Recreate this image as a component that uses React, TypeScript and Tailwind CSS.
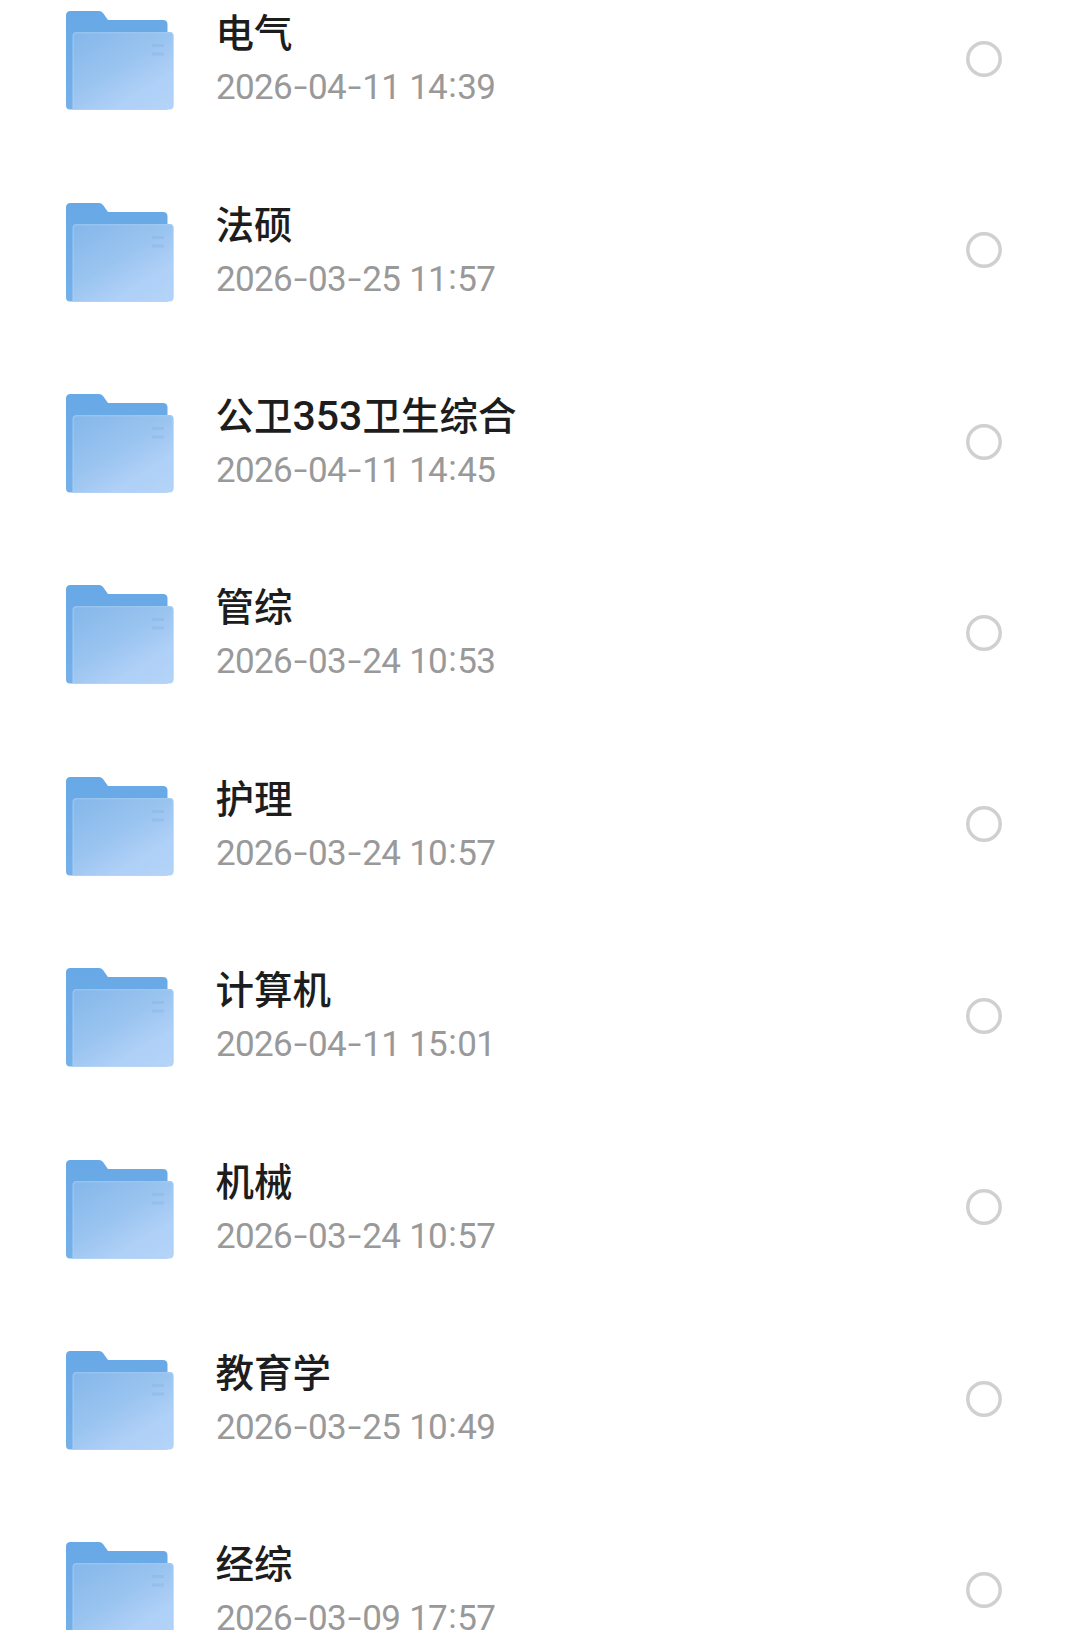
interface Folder {
  name: string;
  date: string;
}

const folders: Folder[] = [
  { name: '电气', date: '2026-04-11 14:39' },
  { name: '法硕', date: '2026-03-25 11:57' },
  { name: '公卫353卫生综合', date: '2026-04-11 14:45' },
  { name: '管综', date: '2026-03-24 10:53' },
  { name: '护理', date: '2026-03-24 10:57' },
  { name: '计算机', date: '2026-04-11 15:01' },
  { name: '机械', date: '2026-03-24 10:57' },
  { name: '教育学', date: '2026-03-25 10:49' },
  { name: '经综', date: '2026-03-09 17:57' },
];

function FolderIcon() {
  return (
    <svg width="108" height="99" viewBox="0 0 108 99" className="shrink-0">
      <defs>
        <linearGradient id="back" x1="0" y1="0" x2="0" y2="1">
          <stop offset="0" stopColor="#67a8e6" />
          <stop offset="1" stopColor="#75b0e9" />
        </linearGradient>
        <linearGradient id="front" x1="0.1" y1="0" x2="0.9" y2="1">
          <stop offset="0" stopColor="#86b8ea" />
          <stop offset="0.45" stopColor="#9ac4f0" />
          <stop offset="0.75" stopColor="#afd0f7" />
          <stop offset="1" stopColor="#b3d3f8" />
        </linearGradient>
      </defs>
      <path
        d="M0 4.5Q0 0 4.5 0H33Q35.5 0 37 2L42 9H97Q101.5 9 101.5 13.5V98.5H4Q0 98.5 0 94.5Z"
        fill="url(#back)"
      />
      <path
        d="M6.5 25Q6.5 21 10.5 21H103.5Q107.5 21 107.5 25V94.5Q107.5 98.5 103.5 98.5H6.5Z"
        fill="url(#front)"
      />
      <path
        d="M7.3 98V25Q7.3 21.7 10.5 21.7H103.5Q106.8 21.7 106.8 25V94.5"
        fill="none"
        stroke="#a5cdf5"
        strokeOpacity="0.5"
        strokeWidth="1.5"
      />
      <path d="M86 34.5H98M86 43H98" stroke="#86b1e2" strokeOpacity="0.4" strokeWidth="3" />
    </svg>
  );
}

function SelectCircle() {
  return (
    <svg width="36" height="36" viewBox="0 0 36 36" className="mt-[32.7px] shrink-0">
      <circle cx="18" cy="18" r="16.2" fill="none" stroke="#d0d0d0" strokeWidth="3.5" />
    </svg>
  );
}

function FolderName({ text }: { text: string }) {
  return (
    <h2 className="h-[44px] whitespace-nowrap font-['Noto_Sans_CJK_SC',sans-serif] text-[38.5px] font-medium leading-[44px] text-[#1d1d1d]">
      {text.split(/(\d+)/).map((part, i) =>
        /\d/.test(part) ? (
          <span key={i} className="font-[Roboto,sans-serif] text-[41px] leading-none">
            {part}
          </span>
        ) : (
          part
        )
      )}
    </h2>
  );
}

function FolderDate({ text }: { text: string }) {
  return (
    <p className="flex h-[40px] whitespace-pre pl-[0.5px] font-[Roboto,sans-serif] text-[35px] leading-[40px] tracking-[-0.7px] text-[#999999] [word-spacing:1px]">
      {text.split(/([-:])/).map((part, i) => {
        if (part === '-') {
          return (
            <span key={i} className="w-[16.2px] -translate-y-[1px] scale-x-[1.4] text-center">
              -
            </span>
          );
        }
        if (part === ':') {
          return (
            <span key={i} className="w-[10.2px] -translate-y-[2px] text-center">
              :
            </span>
          );
        }
        return <span key={i}>{part}</span>;
      })}
    </p>
  );
}

export default function App() {
  return (
    <main className="h-[1643px] w-[1080px] bg-white">
      <ul className="h-[1630px] overflow-hidden">
        {folders.map((folder) => (
          <li key={folder.name} className="flex h-[191.4px] items-start pl-[65.5px] pr-[78px] pt-[8.2px]">
            <div className="pt-[3px]">
              <FolderIcon />
            </div>
            <div className="ml-[42px] flex-1">
              <FolderName text={folder.name} />
              <div className="mt-[16px]">
                <FolderDate text={folder.date} />
              </div>
            </div>
            <SelectCircle />
          </li>
        ))}
      </ul>
    </main>
  );
}
